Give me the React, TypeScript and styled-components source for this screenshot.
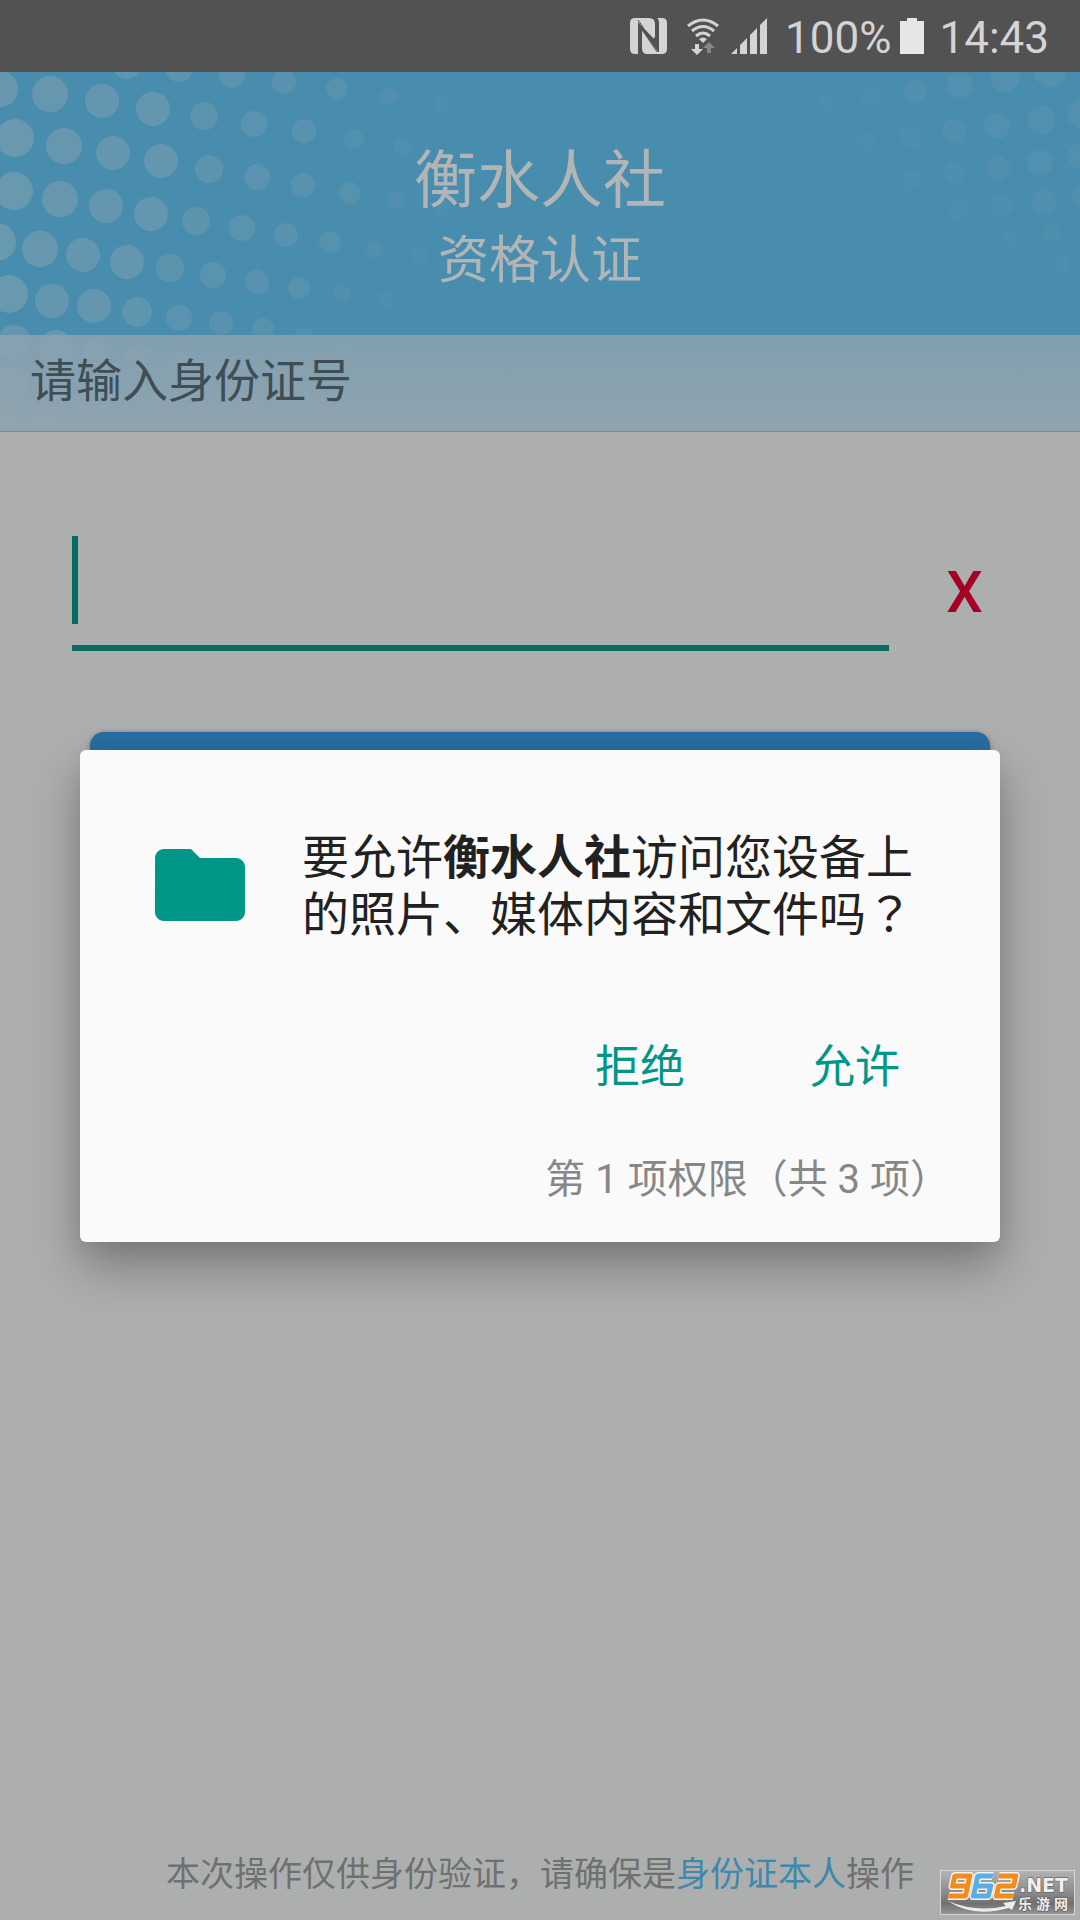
import React from 'react';
import styled, { createGlobalStyle } from 'styled-components';

const GlobalStyle = createGlobalStyle`
  *, *::before, *::after { box-sizing: border-box; }
  body {
    margin: 0;
    background: #adafae;
    font-family: Roboto, "Noto Sans CJK SC", sans-serif;
  }
  button, input { font-family: inherit; }
`;

const Screen = styled.div`
  position: relative;
  display: flex;
  flex-direction: column;
  min-height: 100vh;
  background: #adafae;
`;

const StatusBar = styled.div`
  display: flex;
  align-items: center;
  justify-content: flex-end;
  height: 72px;
  padding-right: 31px;
  background: #525252;
  color: #d4d4d4;
  font-size: 44px;
  line-height: 72px;
`;

const StatusIcon = styled.svg<{ $gap: number }>`
  display: block;
  flex: none;
  margin-right: ${({ $gap }) => $gap}px;
`;

const StatusText = styled.span<{ $gap?: number }>`
  margin-right: ${({ $gap = 0 }) => $gap}px;
  padding-top: 3px;
`;

const Hero = styled.header`
  position: relative;
  overflow: hidden;
  background: #488dae;
  border-bottom: 1px solid #7f8b8e;
`;

const DotField = styled.svg<{ $side: 'left' | 'right' }>`
  position: absolute;
  top: 0;
  ${({ $side }) => $side}: 0;
`;

const TitleBlock = styled.div`
  position: relative;
  padding: 69px 0 42px;
  text-align: center;
  color: #b2b5b6;
`;

const Title = styled.h1`
  margin: 0;
  font-size: 63px;
  font-weight: 400;
  line-height: 80px;
`;

const Subtitle = styled.p`
  margin: 8px 0 0;
  font-size: 51px;
  line-height: 64px;
`;

const PromptBar = styled.label`
  position: relative;
  display: block;
  height: 96px;
  padding: 0 30px 4px;
  background: linear-gradient(rgba(141, 163, 177, 0.82), rgba(149, 165, 174, 0.94));
  color: #3f4d54;
  font-size: 46px;
  line-height: 92px;
`;

const Form = styled.form`
  display: flex;
  flex-direction: column;
  gap: 81px;
  padding-top: 104px;
`;

const FieldRow = styled.div`
  display: flex;
  padding: 0 40px 0 72px;
`;

const Field = styled.div`
  position: relative;
  flex: 1;
`;

const IdInput = styled.input`
  display: block;
  width: 100%;
  height: 115px;
  padding: 0 8px 20px;
  border: 0;
  border-bottom: 6px solid #0a6a60;
  border-radius: 0;
  outline: 0;
  background: transparent;
  color: #333;
  font-size: 63px;
`;

const Caret = styled.span`
  position: absolute;
  top: 0;
  left: 0;
  width: 6px;
  height: 88px;
  background: #056a60;
`;

const ClearButton = styled.button`
  width: 151px;
  padding: 0 0 4px;
  border: 0;
  background: none;
  color: #a50026;
  font-size: 58px;
  font-weight: 500;
  line-height: 110px;
`;

const SubmitButton = styled.button`
  height: 120px;
  margin: 0 90px;
  border: 0;
  border-radius: 14px;
  background: #286da2;
  box-shadow: 0 1px 5px rgba(0, 0, 0, 0.35);
`;

const Footer = styled.footer`
  margin-top: auto;
  padding-bottom: 22px;
  text-align: center;
  color: #6e7170;
  font-size: 34px;
  line-height: 48px;
`;

const FooterAccent = styled.span`
  color: #3f87ad;
`;

const Overlay = styled.div`
  position: absolute;
  inset: 72px 0 0;
  display: flex;
  align-items: center;
  padding: 0 80px;
`;

const Dialog = styled.section`
  flex: 1;
  padding: 79px 50px 32px 66px;
  border-radius: 6px;
  background: #fafafa;
  box-shadow: 0 24px 48px rgba(0, 0, 0, 0.3), 0 4px 20px rgba(0, 0, 0, 0.06);
`;

const Message = styled.div`
  display: flex;
  gap: 48px;
  padding-right: 24px;
`;

const FolderIcon = styled.svg`
  flex: none;
  margin-top: 2px;
`;

const Question = styled.p`
  flex: 1;
  margin: 0;
  color: #212121;
  font-size: 47px;
  line-height: 57px;
`;

const CentredMark = styled.span`
  font-family: "Noto Sans CJK TC", sans-serif;
  line-height: 1;
`;

const Actions = styled.div`
  display: flex;
  justify-content: flex-end;
  gap: 41px;
  margin: 66px 8px 0 0;
`;

const ActionButton = styled.button`
  height: 108px;
  padding: 0 42px;
  border: 0;
  background: none;
  color: #009688;
  font-size: 45px;
  font-weight: 400;
`;

const Counter = styled.p`
  margin: 33px 0 0;
  text-align: right;
  color: #878787;
  font-size: 40px;
  line-height: 60px;
`;

const Watermark = styled.svg`
  position: absolute;
  right: 5px;
  bottom: 5px;
`;

type Dot = [number, number, number];

const leftDots: Dot[] = [
  [127, -8, 15], [179, -4, 14], [232, 3, 13], [284, 10, 12], [337, 17, 11], [389, 24, 9], [442, 31, 8],
  [0, 17, 18], [50, 22, 18], [102, 29, 17], [153, 37, 17], [204, 44, 14], [254, 52, 13], [304, 59, 12], [354, 67, 10], [403, 75, 9],
  [15, 66, 19], [64, 74, 18], [113, 81, 17], [161, 89, 17], [209, 97, 14], [257, 105, 13], [303, 113, 12], [350, 121, 11], [396, 128, 9], [442, 136, 8],
  [14, 119, 19], [60, 127, 18], [106, 134, 17], [151, 142, 17], [196, 149, 14], [242, 156, 13], [286, 163, 12], [330, 170, 11], [375, 177, 9], [419, 184, 8],
  [-3, 170, 19], [40, 177, 18], [83, 183, 17], [127, 190, 17], [170, 196, 14], [213, 203, 13], [257, 210, 12], [299, 216, 11], [342, 222, 9], [385, 228, 8],
  [9, 222, 19], [52, 229, 17], [94, 234, 17], [137, 240, 15], [179, 246, 13], [221, 251, 12], [263, 257, 11], [304, 263, 9], [346, 270, 8],
  [14, 270, 17], [56, 275, 17], [97, 280, 14], [138, 285, 13], [179, 290, 11],
  [9, 311, 18], [52, 316, 15], [7, 350, 15], [45, 350, 15], [84, 353, 11],
];

const rightDots: Dot[] = [
  [241, 37, 8], [286, 31, 9], [330, 25, 10], [375, 19, 12], [420, 13, 13], [465, 5, 15], [510, -1, 16],
  [284, 75, 8], [327, 70, 10], [371, 65, 11], [414, 59, 12], [457, 54, 13], [501, 48, 14], [542, 41, 15],
  [330, 111, 8], [372, 107, 10], [414, 101, 11], [458, 96, 12], [500, 91, 13], [542, 84, 14],
  [377, 143, 8], [419, 139, 10], [462, 134, 11], [504, 129, 12], [544, 124, 12],
  [428, 171, 8], [470, 167, 9], [512, 162, 10],
  [481, 195, 8], [522, 192, 9], [534, 217, 7],
];

function Dots({ side, dots, strength }: { side: 'left' | 'right'; dots: Dot[]; strength: number }) {
  return (
    <DotField $side={side} width="540" height="360" viewBox="0 0 540 360" aria-hidden="true">
      {dots.map(([x, y, r]) => (
        <circle key={`${x}-${y}`} cx={x} cy={y} r={r} fill="#a8b0b2" opacity={(0.04 + (r - 7) * 0.025) * strength} />
      ))}
    </DotField>
  );
}

function StatusIcons() {
  return (
    <>
      <StatusIcon $gap={20} width="37" height="36" viewBox="0 0 37 36" fill="#d4d4d4" aria-hidden="true">
        <path d="M5 0H19Q25 0 25 6V20L8 2V36H5Q0 36 0 31V5Q0 0 5 0Z" />
        <path d="M27 0H32Q37 0 37 5V31Q37 36 32 36H17Q12 36 12 30V12L28 34H29V5Q29 1 27 0Z" />
        <path d="M8 1V4L24 21V17Z" />
        <path d="M13 13L25 23" stroke="#525252" strokeWidth="1.5" />
        <path d="M8 2L13 9V13L27 34" stroke="#525252" strokeWidth="1" fill="none" />
      </StatusIcon>
      <StatusIcon $gap={12} width="32" height="37" viewBox="0 0 32 37" fill="none" aria-hidden="true">
        <g stroke="#d4d4d4" strokeWidth="3">
          <path d="M1 8Q16 -4 31 8" />
          <path d="M5 13Q16 4 27 13" />
          <path d="M9 18Q16 12 23 18" />
        </g>
        <path d="M12 21Q16 18 20 21L16 25Z" fill="#d4d4d4" />
        <path d="M8 26H12V31H16L10 37L4 31H8Z" fill="#d4d4d4" />
        <path d="M20 35H24V30H28L22 24L16 30H20Z" fill="#868686" />
      </StatusIcon>
      <StatusIcon $gap={17} width="37" height="36" viewBox="0 0 37 36" fill="#d4d4d4" aria-hidden="true">
        <path d="M0 36L6 30V36ZM9 36V27L16 20V36ZM19 36V17L26 10V36ZM29 36V7L36 0V36Z" />
      </StatusIcon>
      <StatusText $gap={9}>100%</StatusText>
      <StatusIcon $gap={15} width="24" height="36" viewBox="0 0 24 36" fill="#e6e6e6" aria-hidden="true">
        <path d="M7 0H17V3H24V36H0V3H7Z" />
      </StatusIcon>
      <StatusText>14:43</StatusText>
    </>
  );
}

function SiteMark() {
  return (
    <Watermark width="135" height="45" viewBox="0 0 135 45" role="img" aria-label="962.NET 乐游网">
      <defs>
        <linearGradient id="plate" x1="0" y1="0" x2="0" y2="1">
          <stop offset="0" stopColor="#b4b4b4" />
          <stop offset="0.5" stopColor="#8b8b8b" />
          <stop offset="0.75" stopColor="#707070" />
          <stop offset="1" stopColor="#959595" />
        </linearGradient>
      </defs>
      <rect x="0.5" y="0.5" width="134" height="44" fill="url(#plate)" stroke="#d6d6d6" />
      <g fill="none" strokeLinejoin="round" transform="translate(3 0) skewX(-12)">
        <g stroke="#f2f2f2" strokeWidth="8">
          <path d="M27 16H13V6H28V26H11" />
          <path d="M51 6H36V26H51V16H37" />
          <path d="M57 6H74V16H59V26H76" />
        </g>
        <g strokeWidth="5">
          <path d="M27 16H13V6H28V26H11" stroke="#f28c1c" />
          <path d="M51 6H36V26H51V16H37" stroke="#5aaee0" />
          <path d="M57 6H74V16H59V26H76" stroke="#f28c1c" />
        </g>
      </g>
      <path d="M8 31Q36 43 66 36L63 33L76 31L72 40L69 38Q33 48 8 31Z" fill="#ececec" />
      <g fill="#f0f0f0" stroke="#555" strokeWidth="1" paintOrder="stroke" fontWeight="700">
        <text x="79" y="22" fontSize="19" fontFamily="DejaVu Sans, sans-serif">.NET</text>
        <text x="78" y="39" fontSize="14" fontFamily="Noto Sans CJK SC, sans-serif">乐</text>
        <text x="96" y="39" fontSize="14" fontFamily="Noto Sans CJK SC, sans-serif">游</text>
        <text x="114" y="39" fontSize="14" fontFamily="Noto Sans CJK SC, sans-serif">网</text>
      </g>
    </Watermark>
  );
}

export default function App() {
  return (
    <>
      <GlobalStyle />
      <Screen>
        <StatusBar>
          <StatusIcons />
        </StatusBar>
        <Hero>
          <Dots side="left" dots={leftDots} strength={1} />
          <Dots side="right" dots={rightDots} strength={0.5} />
          <TitleBlock>
            <Title>衡水人社</Title>
            <Subtitle>资格认证</Subtitle>
          </TitleBlock>
          <PromptBar htmlFor="id-number">请输入身份证号</PromptBar>
        </Hero>
        <Form onSubmit={(event) => event.preventDefault()}>
          <FieldRow>
            <Field>
              <IdInput id="id-number" type="text" />
              <Caret />
            </Field>
            <ClearButton type="reset">X</ClearButton>
          </FieldRow>
          <SubmitButton type="submit" aria-label="确定" />
        </Form>
        <Footer>
          本次操作仅供身份验证，请确保是<FooterAccent>身份证本人</FooterAccent>操作
        </Footer>
        <Overlay>
          <Dialog role="dialog" aria-modal="true" aria-labelledby="permission-question">
            <Message>
              <FolderIcon width="108" height="108" viewBox="0 0 24 24" fill="#009688" aria-hidden="true">
                <path d="M10 4H4c-1.1 0-1.99.9-1.99 2L2 18c0 1.1.9 2 2 2h16c1.1 0 2-.9 2-2V8c0-1.1-.9-2-2-2h-8l-2-2z" />
              </FolderIcon>
              <Question id="permission-question">
                要允许<b>衡水人社</b>访问您设备上的照片、媒体内容和文件吗<CentredMark>？</CentredMark>
              </Question>
            </Message>
            <Actions>
              <ActionButton type="button">拒绝</ActionButton>
              <ActionButton type="button">允许</ActionButton>
            </Actions>
            <Counter>第 1 项权限（共 3 项）</Counter>
          </Dialog>
        </Overlay>
        <SiteMark />
      </Screen>
    </>
  );
}
